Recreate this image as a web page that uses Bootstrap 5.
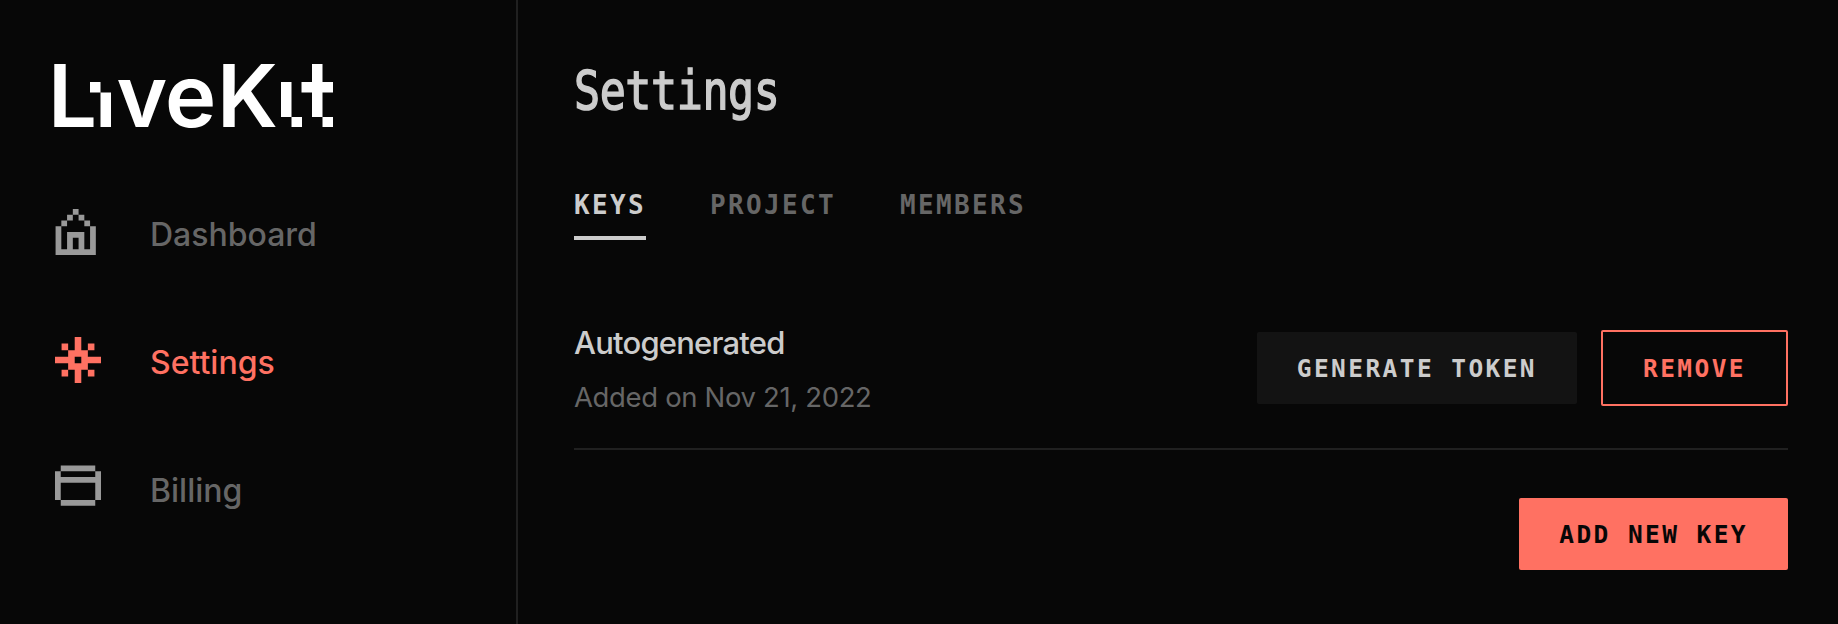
<!DOCTYPE html>
<html lang="en">
<head>
<meta charset="utf-8">
<meta name="viewport" content="width=device-width, initial-scale=1">
<title>LiveKit Settings</title>
<link href="https://cdn.jsdelivr.net/npm/bootstrap@5.3.0/dist/css/bootstrap.min.css" rel="stylesheet">
<style>
  :root { --lk-bg:#070707; --lk-line:#202020; --lk-fg:#ccc; --lk-dim:#666; --lk-accent:#ff7162; }
  body { background:var(--lk-bg); color:var(--lk-fg); font-family:Inter,"Liberation Sans",sans-serif; overflow:hidden; }
  .sidebar { width:518px; border-right:2px solid var(--lk-line); padding:64px 0 0 54px; }
  .brand-logo { font-family:Inter,sans-serif; font-weight:600; font-size:86.6px; fill:#fff; overflow:visible; }
  .side-nav { margin-top:40px; }
  .side-nav .nav-link { height:128px; padding:0 0 0 1px; gap:49px; color:var(--lk-dim); font-size:32px; font-weight:500; line-height:46px; }
  .side-nav .nav-link svg { fill:#999; }
  .side-nav .nav-link.active { color:var(--lk-accent); }
  .side-nav .nav-link.active svg { fill:var(--lk-accent); }
  .side-nav span { padding-top:5px; }
  .content { padding:54px 50px 0 56px; }
  .page-title { font-family:"DejaVu Sans Mono",monospace; font-size:53.5px; font-weight:400; line-height:74px; height:72px; transform:scaleX(.81); transform-origin:0 0; -webkit-text-stroke:1.5px; letter-spacing:-.5px; width:max-content; }
  .mono { font-family:"DejaVu Sans Mono",monospace; font-weight:700; }
  .tab-bar { gap:64px; margin-top:58px; }
  .tab-bar .nav-link { padding:0; height:56px; border-bottom:4px solid transparent; color:var(--lk-dim); font-size:26px; letter-spacing:2.35px; line-height:43px; }
  .tab-bar .nav-link.active { color:var(--lk-fg); border-color:var(--lk-fg); }
  .key-row { height:210px; border-bottom:2px solid var(--lk-line); padding-top:46px; }
  .key-name { font-size:31px; font-weight:500; line-height:48px; margin-top:33px; letter-spacing:-.8px; }
  .key-date { font-size:27.5px; line-height:40px; color:var(--lk-dim); margin-top:10px; letter-spacing:-.35px; }
  .key-actions { gap:24px; padding-top:44px; }
  .btn-lk { font-size:24.5px; line-height:32px; letter-spacing:2.41px; padding:21px 40px 19px; border:0; border-radius:2px; }
  .btn-token { background:#131313; color:var(--lk-fg); }
  .btn-remove { border:2px solid var(--lk-accent); color:var(--lk-accent); }
  .btn-add { background:var(--lk-accent); color:var(--lk-bg); margin-top:48px; }
</style>
</head>
<body>
<div class="d-flex vh-100">
  <aside class="sidebar flex-shrink-0">
    <svg class="brand-logo d-block" width="280" height="64" role="img" aria-label="LiveKit">
      <text x="-6" y="63">L</text>
      <path d="M36 18h10.500v10.500h-10.500zM46.500 28.500h10.500v34.500h-10.500z"/>
      <text x="62.500" y="63">v</text>
      <text x="111" y="63">e</text>
      <text x="163" y="63">K</text>
      <path d="M227 18h10.500v35h-10.500zM237.500 53h10.500v10h-10.500z"/>
      <path d="M258 0h10.500v18h10.500v10.500h-10.500v24.500h-10.500v-24.500h-10.500v-10.500h10.500zM268.500 53h10.500v10h-10.500z"/>
    </svg>
    <nav class="side-nav nav flex-column">
      <a class="nav-link d-flex align-items-center" href="#">
        <svg width="46" height="46" viewBox="0 0 8 8"><path transform="translate(.1 0)" d="M3 0h1v1H3zM2 1h1v1H2zM4 1h1v1H4zM1 2h1v1H1zM5 2h1v1H5zM0 3h1v4h1V4h3v3h1V3h1v5H0zM3 5v2h1V5z"/></svg>
        <span>Dashboard</span>
      </a>
      <a class="nav-link active d-flex align-items-center" href="#">
        <svg width="46" height="46" viewBox="0 0 7 7"><path fill-rule="evenodd" d="M3 0h1v2h1v1h2v1H5v1H4v2H3V5H2V4H0V3h2V2h1zM3 3v1h1V3zM1 1h1v1H1zM5 1h1v1H5zM1 5h1v1H1zM5 5h1v1H5z"/></svg>
        <span>Settings</span>
      </a>
      <a class="nav-link d-flex align-items-center" href="#">
        <svg width="46" height="46" viewBox="0 0 8 8"><path transform="translate(0 .1)" d="M1 0h6v1H1zM0 1h1v1h6V1h1v5H7V3H1v3H0zM1 6h6v1H1z"/></svg>
        <span>Billing</span>
      </a>
    </nav>
  </aside>
  <main class="content flex-grow-1">
    <h1 class="page-title mb-0">Settings</h1>
    <nav class="tab-bar nav mono">
      <a class="nav-link active" href="#">KEYS</a>
      <a class="nav-link" href="#">PROJECT</a>
      <a class="nav-link" href="#">MEMBERS</a>
    </nav>
    <section class="key-row d-flex justify-content-between align-items-start">
      <div>
        <div class="key-name">Autogenerated</div>
        <div class="key-date">Added on Nov 21, 2022</div>
      </div>
      <div class="key-actions d-flex align-items-center">
        <button class="btn btn-lk btn-token mono">GENERATE TOKEN</button>
        <button class="btn btn-lk btn-remove mono">REMOVE</button>
      </div>
    </section>
    <div class="d-flex justify-content-end">
      <button class="btn btn-lk btn-add mono">ADD NEW KEY</button>
    </div>
  </main>
</div>
<script src="https://cdn.jsdelivr.net/npm/bootstrap@5.3.0/dist/js/bootstrap.bundle.min.js"></script>
</body>
</html>
